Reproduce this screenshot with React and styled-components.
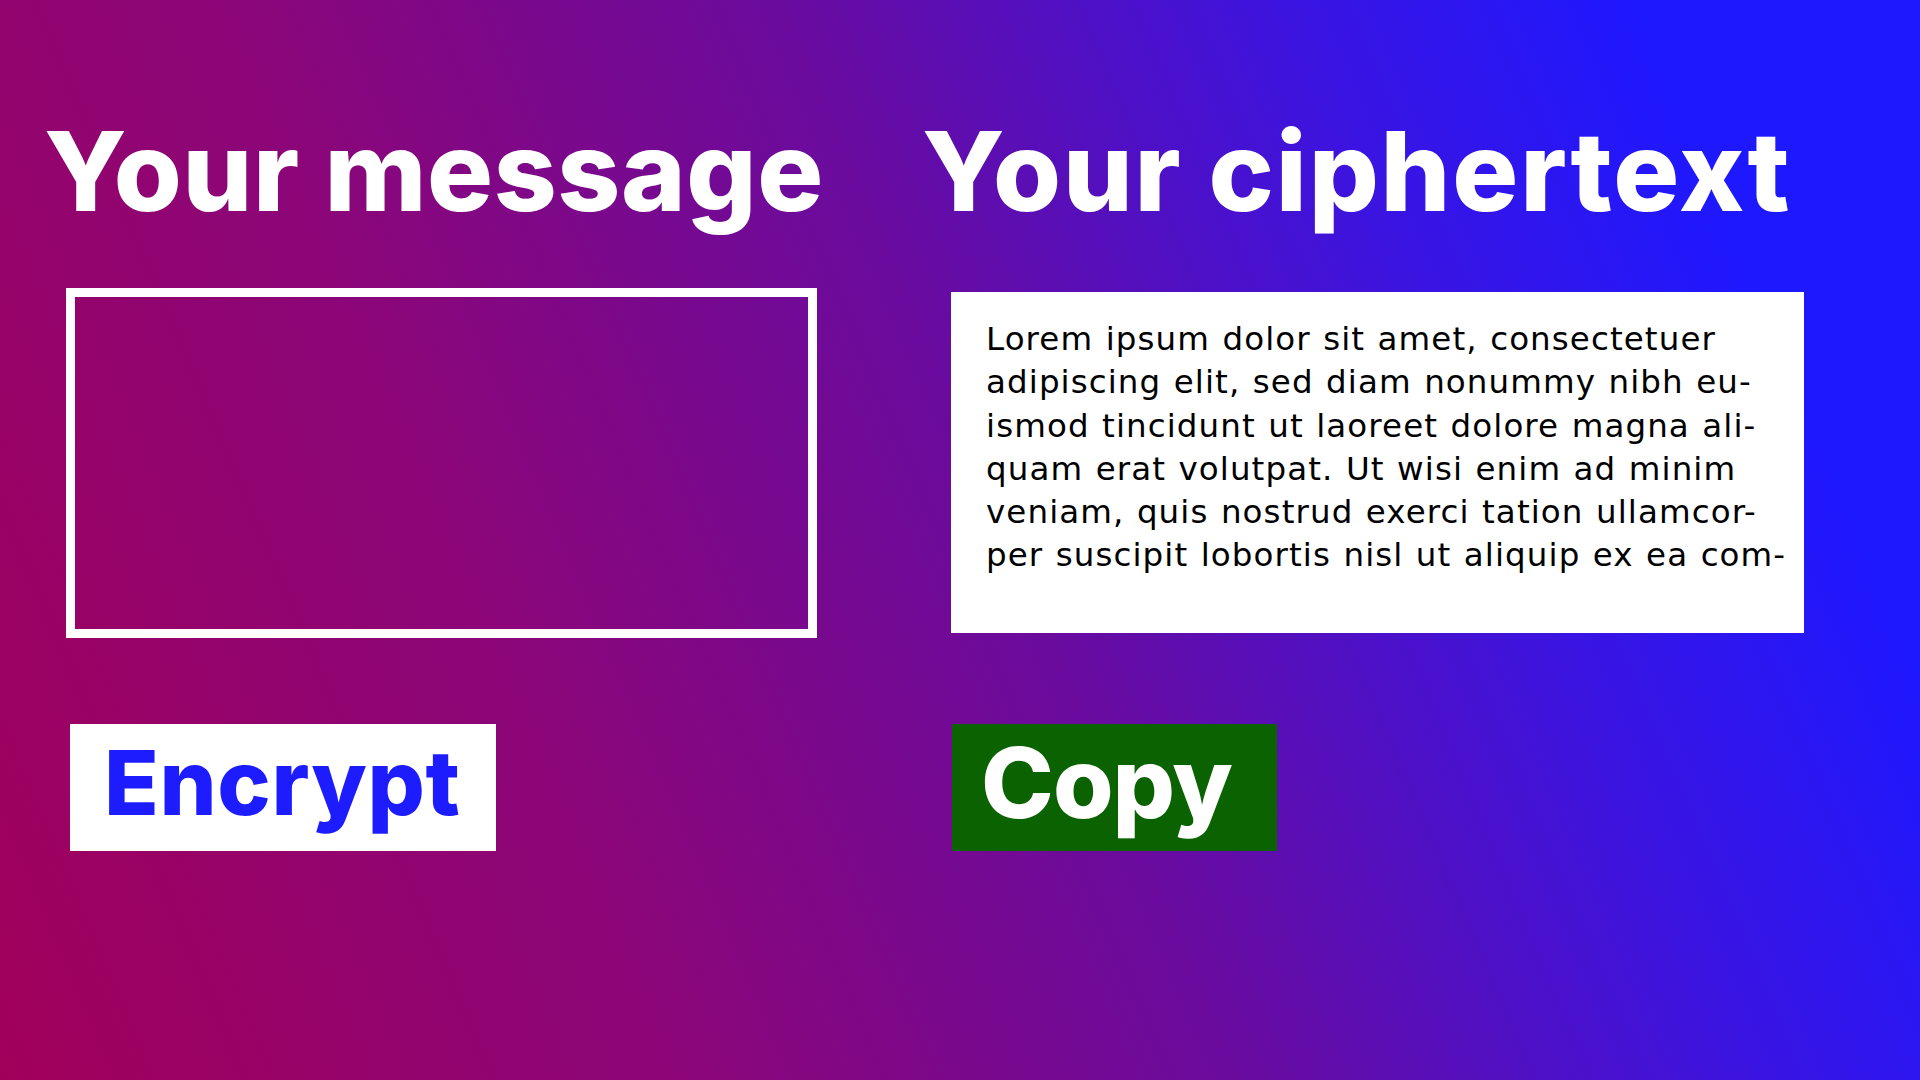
import React from "react";
import styled, { createGlobalStyle } from "styled-components";

const GlobalStyle = createGlobalStyle`
  html, body {
    margin: 0;
    padding: 0;
  }
  body {
    font-family: "Open Sans", "Liberation Sans", sans-serif;
  }
`;

const Page = styled.div`
  width: 1920px;
  height: 1080px;
  box-sizing: border-box;
  padding: 116px 0 0 44px;
  background: linear-gradient(67deg, #a1005a 0%, #8a067a 30%, #6a0b9e 52%, #3a14e2 74%, #1e18ff 88%);
  display: grid;
  grid-template-columns: 878px 1fr;
  overflow: hidden;
`;

const Column = styled.section`
  display: flex;
  flex-direction: column;
  align-items: flex-start;
`;

const Title = styled.h1`
  margin: 0;
  font-family: "Inter", "Liberation Sans", sans-serif;
  font-weight: 800;
  font-size: 110px;
  line-height: 1;
  letter-spacing: ${(p) => p.$spacing}px;
  color: #fff;
`;

const MessageBox = styled.textarea`
  box-sizing: border-box;
  margin: 62px 0 0 22px;
  width: 751px;
  height: 350px;
  border: 9px solid #fff;
  background: transparent;
  resize: none;
  outline: none;
`;

const CipherBox = styled.div`
  box-sizing: border-box;
  margin: 66px 0 0 29px;
  width: 853px;
  height: 341px;
  background: #fff;
  padding: 26px 20px 0 35px;
  font-family: "DejaVu Sans", "Open Sans", sans-serif;
  font-size: 32.5px;
  line-height: 43.3px;
  letter-spacing: 1.1px;
  word-spacing: 1px;
  color: #000;
`;

const Line = styled.div`
  white-space: nowrap;
`;

const Button = styled.button`
  box-sizing: border-box;
  margin: ${(p) => p.$top}px 0 0 ${(p) => p.$left}px;
  height: 127px;
  width: ${(p) => p.$width}px;
  border: none;
  padding: 0 0 10px ${(p) => p.$pad}px;
  text-align: left;
  background: ${(p) => p.$bg};
  color: ${(p) => p.$fg};
  font-family: "Inter", "Liberation Sans", sans-serif;
  font-weight: 800;
  font-size: ${(p) => p.$size}px;
  line-height: 1;
  letter-spacing: ${(p) => p.$spacing}px;
  cursor: pointer;
`;

const cipherLines = [
  "Lorem ipsum dolor sit amet, consectetuer",
  "adipiscing elit, sed diam nonummy nibh eu-",
  "ismod tincidunt ut laoreet dolore magna ali-",
  "quam erat volutpat. Ut wisi enim ad minim",
  "veniam, quis nostrud exerci tation ullamcor-",
  "per suscipit lobortis nisl ut aliquip ex ea com-",
];

export default function App() {
  return (
    <>
      <GlobalStyle />
      <Page>
        <Column>
          <Title $spacing={0.6}>Your message</Title>
          <MessageBox aria-label="Your message" />
          <Button $top={86} $left={26} $width={426} $pad={34} $size={90} $spacing={0.6} $bg="#fff" $fg="#1c1cff">
            Encrypt
          </Button>
        </Column>
        <Column>
          <Title $spacing={1.8}>Your ciphertext</Title>
          <CipherBox>
            {cipherLines.map((l) => (
              <Line key={l}>{l}</Line>
            ))}
          </CipherBox>
          <Button $top={91} $left={30} $width={325} $pad={29} $size={98} $spacing={-1} $bg="#0a6300" $fg="#fff">
            Copy
          </Button>
        </Column>
      </Page>
    </>
  );
}
